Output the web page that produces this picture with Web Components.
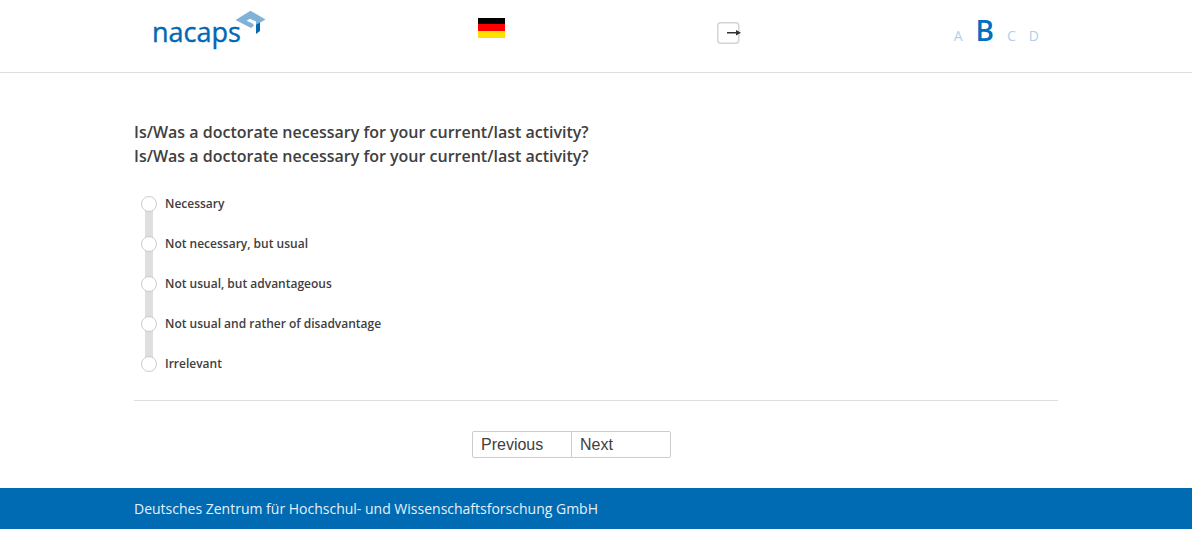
<!DOCTYPE html>
<html lang="en">
<head>
<meta charset="utf-8">
<meta name="viewport" content="width=device-width, initial-scale=1">
<title>nacaps</title>
<style>
  body {
    margin: 0;
    background: #fff;
    color: #404040;
    font-family: "Open Sans", "Noto Sans", sans-serif;
    --blue: #006bb3;
    --line: #ddd;
    --page-width: 924px;
  }
  main {
    box-sizing: border-box;
    max-width: var(--page-width);
    margin: 0 auto;
    padding: 47px 0 30px;
  }
</style>
</head>
<body>
<survey-header></survey-header>
<main>
  <survey-question name="doctorate">
    <span slot="title">Is/Was a doctorate necessary for your current/last activity?</span>
    <span slot="text">Is/Was a doctorate necessary for your current/last activity?</span>
    <survey-option>Necessary</survey-option>
    <survey-option>Not necessary, but usual</survey-option>
    <survey-option>Not usual, but advantageous</survey-option>
    <survey-option>Not usual and rather of disadvantage</survey-option>
    <survey-option>Irrelevant</survey-option>
  </survey-question>
  <survey-nav></survey-nav>
</main>
<survey-footer>Deutsches Zentrum für Hochschul- und Wissenschaftsforschung GmbH</survey-footer>

<script>
class NacapsLogo extends HTMLElement {
  connectedCallback() {
    this.attachShadow({ mode: 'open' });
    this.shadowRoot.innerHTML = `
      <style>
        :host { display: block; }
        svg { display: block; }
        text {
          font: 500 27px "Open Sans", "Noto Sans", sans-serif;
          fill: #0068b4;
          stroke: #0068b4;
          stroke-width: .4px;
        }
      </style>
      <svg width="115" height="44" viewBox="0 0 115 44" role="img" aria-label="nacaps">
        <text x="1" y="32">nacaps</text>
        <path fill="#7fb2d9" d="M84.500 10 99.500 .8 114.500 9.500 109 12.700 105 14.500V11.500L99 8.700 95.500 10.800 101.500 13.500 103 15.500 100 18Z"/>
        <path fill="#0068b4" d="M105 14.500 109 12.500V21L105 24Z"/>
      </svg>
    `;
  }
}

class LanguageSwitch extends HTMLElement {
  connectedCallback() {
    this.attachShadow({ mode: 'open' });
    this.shadowRoot.innerHTML = `
      <style>
        :host { display: block; }
        a, svg { display: block; }
      </style>
      <a href="#de" aria-label="Deutsch">
        <svg width="27" height="20" viewBox="0 0 27 20" shape-rendering="crispEdges">
          <rect width="27" height="6" fill="#000"/>
          <rect y="6" width="27" height="7" fill="#f00"/>
          <rect y="13" width="27" height="7" fill="#ffe000"/>
        </svg>
      </a>
    `;
  }
}

class ExitLink extends HTMLElement {
  connectedCallback() {
    this.attachShadow({ mode: 'open' });
    this.shadowRoot.innerHTML = `
      <style>
        :host { display: block; }
        a, svg { display: block; }
      </style>
      <a href="#exit" aria-label="Exit">
        <svg width="24" height="22" viewBox="0 0 24 22">
          <rect x=".75" y=".75" width="21" height="20.500" rx="3" fill="#fff" stroke="#d4d4d4" stroke-width="1.500"/>
          <path d="M10 10.750H20" stroke="#333" stroke-width="1.500"/>
          <path d="M19 8 24 10.750 19 13.500Z" fill="#333"/>
        </svg>
      </a>
    `;
  }
}

class SectionProgress extends HTMLElement {
  connectedCallback() {
    this.attachShadow({ mode: 'open' });
    this.shadowRoot.innerHTML = `
      <style>
        :host { display: block; }
        ol {
          display: flex;
          align-items: baseline;
          gap: 13px;
          list-style: none;
          margin: 0;
          padding: 0;
          font-size: 14px;
          line-height: 28px;
          color: #b0d0e9;
        }
        .current {
          font-size: 28px;
          font-weight: 600;
          color: #0070c0;
        }
      </style>
      <ol>
        <li>A</li>
        <li class="current" aria-current="step">B</li>
        <li>C</li>
        <li>D</li>
      </ol>
    `;
  }
}

class SurveyHeader extends HTMLElement {
  connectedCallback() {
    this.attachShadow({ mode: 'open' });
    this.shadowRoot.innerHTML = `
      <style>
        :host {
          display: block;
          border-bottom: 1px solid var(--line);
        }
        header {
          display: flex;
          justify-content: space-between;
          align-items: flex-start;
          box-sizing: border-box;
          max-width: var(--page-width);
          min-height: 72px;
          margin: 0 auto;
          padding: 10px 19px 0 17px;
        }
        language-switch { margin-top: 8px; }
        exit-link { margin-top: 12px; }
        section-progress { margin-top: 6px; }
      </style>
      <header>
        <nacaps-logo></nacaps-logo>
        <language-switch></language-switch>
        <exit-link></exit-link>
        <section-progress></section-progress>
      </header>
    `;
  }
}

class SurveyOption extends HTMLElement {
  connectedCallback() {
    const name = this.parentElement.getAttribute('name');
    this.attachShadow({ mode: 'open' });
    this.shadowRoot.innerHTML = `
      <style>
        :host {
          display: block;
          --up: #dfdfdf;
          --down: #dfdfdf;
        }
        :host(:first-of-type) { --up: transparent; }
        :host(:last-of-type) { --down: transparent; }
        label {
          display: flex;
          align-items: center;
          gap: 8px;
          height: 40px;
          font-size: 12px;
          font-weight: 600;
          line-height: 16px;
          cursor: pointer;
        }
        /* the grey rail joins the circles of neighbouring rows */
        .rail {
          display: flex;
          align-items: center;
          align-self: stretch;
          background: linear-gradient(var(--up) 50%, var(--down) 50%) center / 8px 100% no-repeat;
        }
        input {
          appearance: none;
          width: 16px;
          height: 16px;
          margin: 0;
          border: 1px solid #ccc;
          border-radius: 50%;
          background: #fff;
        }
        input:checked { background: var(--blue); }
      </style>
      <label>
        <span class="rail"><input type="radio" name="${name}"></span>
        <slot></slot>
      </label>
    `;
    this.input = this.shadowRoot.querySelector('input');
    this.input.addEventListener('change', () => {
      for (const option of this.parentElement.querySelectorAll('survey-option')) {
        if (option !== this) option.input.checked = false;
      }
    });
  }
}

class SurveyQuestion extends HTMLElement {
  connectedCallback() {
    this.attachShadow({ mode: 'open' });
    this.shadowRoot.innerHTML = `
      <style>
        :host {
          display: block;
          border-bottom: 1px solid var(--line);
          padding-bottom: 16px;
        }
        h1, p {
          margin: 0;
          font-size: 16px;
          font-weight: 600;
          line-height: 24px;
        }
        .options {
          margin-top: 16px;
          padding-left: 7px;
        }
      </style>
      <h1><slot name="title"></slot></h1>
      <p><slot name="text"></slot></p>
      <div class="options" role="radiogroup"><slot></slot></div>
    `;
  }
}

class SurveyNav extends HTMLElement {
  connectedCallback() {
    this.attachShadow({ mode: 'open' });
    this.shadowRoot.innerHTML = `
      <style>
        :host {
          display: flex;
          justify-content: center;
          margin-top: 30px;
          padding-right: 49px;
        }
        button {
          width: 100px;
          height: 27px;
          padding: 0 8px;
          border: 1px solid #ccc;
          background: #fff;
          color: #404040;
          font: 16px/24px "Liberation Sans", Arial, sans-serif;
          text-align: left;
        }
        .previous { border-radius: 2px 0 0 2px; }
        .next {
          margin-left: -1px;
          border-radius: 0 2px 2px 0;
        }
      </style>
      <button type="button" class="previous">Previous</button>
      <button type="button" class="next">Next</button>
    `;
  }
}

class SurveyFooter extends HTMLElement {
  connectedCallback() {
    this.attachShadow({ mode: 'open' });
    this.shadowRoot.innerHTML = `
      <style>
        :host {
          display: block;
          background: var(--blue);
          color: #e6f0f7;
          font-size: 14px;
          line-height: 21px;
        }
        footer {
          max-width: var(--page-width);
          margin: 0 auto;
          padding: 10px 0;
        }
      </style>
      <footer><slot></slot></footer>
    `;
  }
}

customElements.define('nacaps-logo', NacapsLogo);
customElements.define('language-switch', LanguageSwitch);
customElements.define('exit-link', ExitLink);
customElements.define('section-progress', SectionProgress);
customElements.define('survey-header', SurveyHeader);
customElements.define('survey-option', SurveyOption);
customElements.define('survey-question', SurveyQuestion);
customElements.define('survey-nav', SurveyNav);
customElements.define('survey-footer', SurveyFooter);
</script>
</body>
</html>
